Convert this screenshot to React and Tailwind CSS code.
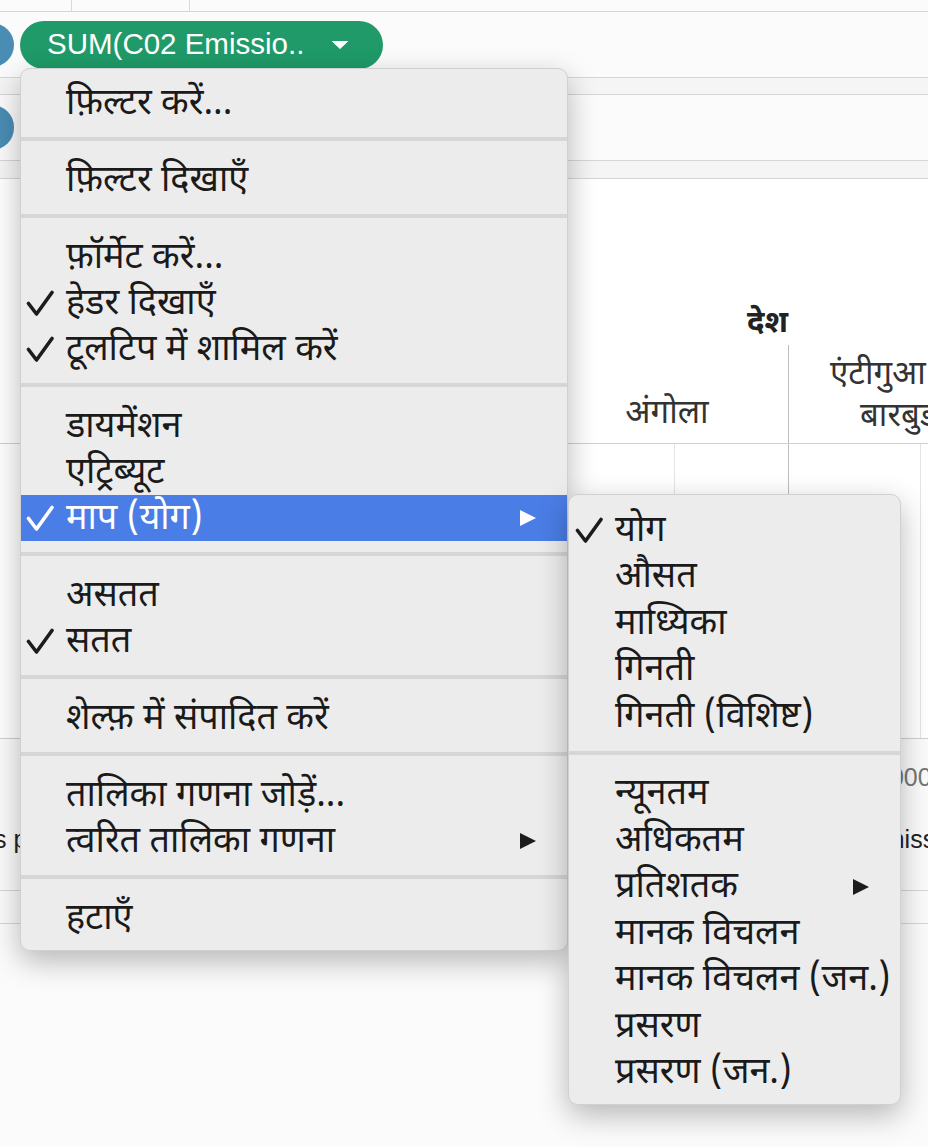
import React from "react";

const Check = ({ color = "#1c1c1c" }) => (
  <svg width="28" height="26" viewBox="0 0 28 26">
    <path
      d="M2.5 13.5 L10.5 24 L26 2.5"
      fill="none"
      stroke={color}
      strokeWidth="3.6"
      strokeLinecap="round"
      strokeLinejoin="round"
    />
  </svg>
);

const Arrow = ({ color = "#1c1c1c" }) => (
  <svg className="shrink-0 mr-[10px]" width="18" height="18" viewBox="0 0 18 18">
    <polygon points="1,1 17,9 1,17" fill={color} />
  </svg>
);

const Sep = () => <div className="mt-[11px] mb-[16px] h-[4px] bg-[#d6d6d6]" />;

const Item = ({ label, checked, sub, active, h = "h-[46px]", pl = "pl-[5px]" }) => (
  <div
    className={`${h} ${pl} pr-[20px] flex items-center ${
      active ? "bg-[#4a7de6] text-white" : "text-[#1a1a1a]"
    }`}
  >
    <div className="w-[40px] shrink-0 flex items-center">
      {checked && <Check color={active ? "#ffffff" : "#1c1c1c"} />}
    </div>
    <span className="flex-1 min-w-0 whitespace-nowrap leading-none pt-[5px]">{label}</span>
    {sub && <Arrow color={active ? "#ffffff" : "#1c1c1c"} />}
  </div>
);

const mainMenu = [
  [{ label: "फ़िल्टर करें..." }],
  [{ label: "फ़िल्टर दिखाएँ" }],
  [
    { label: "फ़ॉर्मेट करें..." },
    { label: "हेडर दिखाएँ", checked: true },
    { label: "टूलटिप में शामिल करें", checked: true },
  ],
  [
    { label: "डायमेंशन" },
    { label: "एट्रिब्यूट" },
    { label: "माप (योग)", checked: true, sub: true, active: true },
  ],
  [{ label: "असतत" }, { label: "सतत", checked: true }],
  [{ label: "शेल्फ़ में संपादित करें" }],
  [{ label: "तालिका गणना जोड़ें..." }, { label: "त्वरित तालिका गणना", sub: true }],
  [{ label: "हटाएँ" }],
];

const subMenu = [
  [
    { label: "योग", checked: true },
    { label: "औसत" },
    { label: "माध्यिका" },
    { label: "गिनती" },
    { label: "गिनती (विशिष्ट)" },
  ],
  [
    { label: "न्यूनतम" },
    { label: "अधिकतम" },
    { label: "प्रतिशतक", sub: true },
    { label: "मानक विचलन" },
    { label: "मानक विचलन (जन.)" },
    { label: "प्रसरण" },
    { label: "प्रसरण (जन.)" },
  ],
];

export default function App() {
  return (
    <div className="relative w-[928px] h-[1147px] overflow-hidden bg-[#fbfbfb] font-['Noto_Sans_Devanagari','Noto_Sans','Liberation_Sans',sans-serif] text-[36px]">
      {/* worksheet behind the menus */}
      <div className="flex flex-col">
        <div className="h-[12px] border-b border-[#d4d4d4] flex">
          <div className="w-[72px] border-r border-[#d9d9d9]" />
          <div className="w-[118px] border-r border-[#d9d9d9]" />
        </div>
        <div className="h-[66px] border-b border-[#d6d6d6] flex items-center">
          <div className="w-[44px] h-[44px] -ml-[30px] rounded-full bg-[#4a8db4]" />
          <div className="ml-[6px] h-[48px] w-[363px] rounded-full bg-[#1f9a68] flex items-center pl-[27px] font-['Liberation_Sans',sans-serif] text-[29.5px] text-white">
            <span className="whitespace-nowrap">SUM(C02 Emissio..</span>
            <svg className="ml-[28px]" width="16" height="8" viewBox="0 0 16 8">
              <polygon points="0.5,0.5 15.5,0.5 8,7.5" fill="#ffffff" stroke="#ffffff" strokeLinejoin="round" />
            </svg>
          </div>
        </div>
        <div className="h-[17px] border-b border-[#d6d6d6] bg-[#f5f5f5]" />
        <div className="h-[66px] border-b border-[#d6d6d6] flex items-center">
          <div className="w-[44px] h-[45px] -ml-[30px] rounded-full bg-[#4a8db4]" />
        </div>
        <div className="h-[18px] border-b border-[#d6d6d6] bg-[#f5f5f5]" />

        <div className="h-[166px] bg-white flex items-end pl-[747px]">
          <span className="font-bold text-[31px] leading-[41px] text-[#222]">देश</span>
        </div>
        <div className="h-[99px] bg-white border-b border-[#cfcfcf] flex text-[#333] text-[33px]">
          <div className="w-[546px] shrink-0" />
          <div className="w-[243px] shrink-0 border-r border-[#bdbdbd] flex items-end justify-center pb-[4px]">
            <span>अंगोला</span>
          </div>
          <div className="w-[262px] shrink-0 flex flex-col items-start justify-end pb-[4px] leading-[42px]">
            <span className="pl-[41px] whitespace-nowrap">एंटीगुआ</span>
            <span className="pl-[71px] whitespace-nowrap">बारबुडा</span>
          </div>
        </div>
        <div className="h-[295px] bg-white border-b border-[#cfcfcf] flex">
          <div className="w-[675px] shrink-0 border-r border-[#e4e4e4]" />
          <div className="w-[114px] shrink-0 border-r border-[#bdbdbd]" />
          <div className="w-[132px] shrink-0 border-r border-[#e4e4e4]" />
        </div>
        <div className="h-[152px] border-b border-[#d6d6d6] font-['Liberation_Sans',sans-serif]">
          <div className="flex pl-[876px] pt-[20px] text-[25px] text-[#777]">1000</div>
          <div className="flex justify-between pt-[24px] text-[25px] text-[#222]">
            <span className="-ml-[6px]">s p</span>
            <span className="whitespace-nowrap mr-[-53px]">Emissions</span>
          </div>
        </div>
        <div className="h-[33px] border-b border-[#d6d6d6]" />
      </div>

      {/* main context menu */}
      <div className="absolute left-[20px] top-[68px] w-[548px] rounded-[10px] bg-[#ececec] border border-[#d0d0d0] shadow-[0_10px_30px_rgba(0,0,0,0.28)] pt-[11px] pb-[9px]">
        {mainMenu.map((group, gi) => (
          <div key={gi}>
            {gi > 0 && <Sep />}
            {group.map((it) => (
              <Item key={it.label} {...it} />
            ))}
          </div>
        ))}
      </div>

      {/* submenu */}
      <div className="absolute left-[568px] top-[494px] w-[333px] rounded-[10px] bg-[#ececec] border border-[#d0d0d0] shadow-[0_10px_30px_rgba(0,0,0,0.28)] pt-[12px] pb-[8px]">
        {subMenu.map((group, gi) => (
          <div key={gi}>
            {gi > 0 && <Sep />}
            {group.map((it) => (
              <Item key={it.label} {...it} h="h-[46.5px]" pl="pl-[6px]" />
            ))}
          </div>
        ))}
      </div>
    </div>
  );
}
